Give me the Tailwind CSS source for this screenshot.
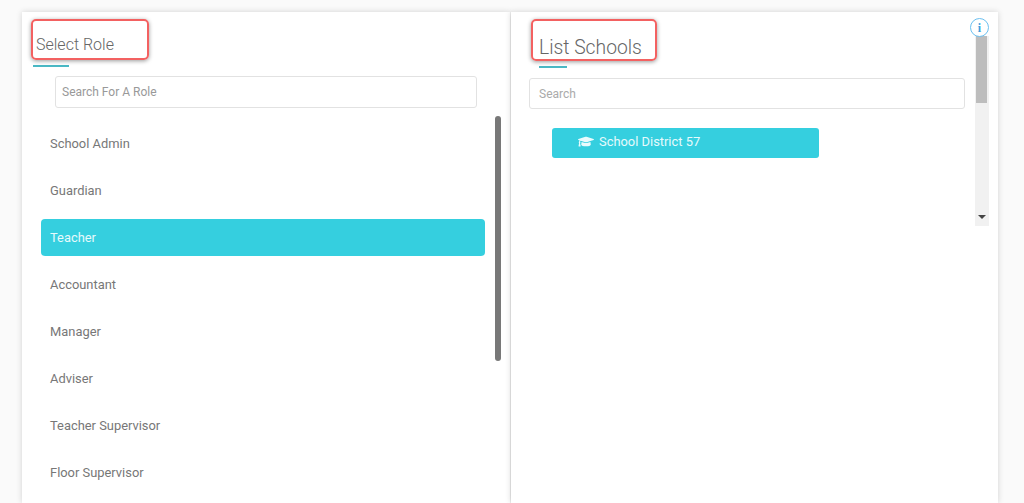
<!DOCTYPE html>
<html>
<head>
<meta charset="utf-8">
<script src="https://cdn.jsdelivr.net/npm/@tailwindcss/browser@4"></script>
</head>
<body class="h-[503px] w-[1024px] overflow-hidden bg-[#fafafa] font-['Roboto','Liberation_Sans',sans-serif]">
<div class="flex h-[503px] gap-px overflow-hidden pl-[22px] pt-3">
  <section class="relative h-[491px] w-[488px] shrink-0 overflow-hidden bg-white shadow-[0_0_6px_rgba(0,0,0,0.16)]">
    <div class="relative ml-[9px] mt-[7px] h-[41px] w-[118px] rounded-[5px] border-2 border-[#f36161] shadow-[0_1px_4px_rgba(0,0,0,0.4)]">
      <h2 class="pl-[3px] pt-[14px] text-[16px] font-light leading-5 text-[#666]">Select Role</h2>
    </div>
    <div class="ml-[11px] mt-[5px] h-0.5 w-9 bg-[#4ab8c4]"></div>
    <div class="ml-[33px] mt-[9px] flex h-8 w-[422px] items-center rounded-[3px] border border-[#e2e2e2] bg-white pl-[6px] text-[12px] text-[#999]">Search For A Role</div>
    <div class="ml-[19px] mt-[17px] flex h-[400px] w-[444px] flex-col gap-[10px] overflow-hidden text-[12.9px] text-[#777]">
      <div class="flex h-[37px] shrink-0 items-center pl-[9px]">School Admin</div>
      <div class="flex h-[37px] shrink-0 items-center pl-[9px]">Guardian</div>
      <div class="flex h-[37px] shrink-0 items-center rounded-[4px] bg-[#35cfdf] pl-[9px] text-[#e6fafc]">Teacher</div>
      <div class="flex h-[37px] shrink-0 items-center pl-[9px]">Accountant</div>
      <div class="flex h-[37px] shrink-0 items-center pl-[9px]">Manager</div>
      <div class="flex h-[37px] shrink-0 items-center pl-[9px]">Adviser</div>
      <div class="flex h-[37px] shrink-0 items-center pl-[9px]">Teacher Supervisor</div>
      <div class="flex h-[37px] shrink-0 items-center pl-[9px]">Floor Supervisor</div>
    </div>
    <div class="absolute left-[473px] top-[104px] h-[245px] w-[6px] rounded-[3px] bg-[#787878]"></div>
  </section>
  <section class="relative h-[491px] w-[487px] shrink-0 overflow-hidden bg-white shadow-[0_0_6px_rgba(0,0,0,0.16)]">
    <div class="relative ml-5 mt-[7px] h-[42px] w-[126px] rounded-[5px] border-2 border-[#f36161] shadow-[0_1px_4px_rgba(0,0,0,0.4)]">
      <h2 class="pl-[6px] pt-[15px] text-[19.3px] font-light leading-6 text-[#666]">List Schools</h2>
    </div>
    <div class="ml-7 mt-[5px] h-0.5 w-7 bg-[#4ab8c4]"></div>
    <div class="ml-[18px] mt-[10px] flex h-[31px] w-[436px] items-center rounded-[3px] border border-[#e2e2e2] bg-white pl-[9px] text-[12px] text-[#aaa]">Search</div>
    <div class="ml-[41px] mt-[19px] flex h-[30px] w-[267px] items-center rounded-[3px] bg-[#35cfdf] pb-[3px] pl-[26px] text-[12.9px] text-[#e6fafc]">
      <svg class="mr-[5px] h-[13px] w-[16px]" viewBox="0 0 640 512" fill="#eafbfd"><path d="M622.3 153.2 343.4 67.5c-15.2-4.7-31.6-4.7-46.8 0L17.7 153.2c-23.6 7.3-23.6 38.3 0 45.6l48.6 14.9c-10.7 13.2-17.2 29.4-17.9 47.1C38.7 266.9 32 278.1 32 291.2c0 11.8 5.5 21.9 13.9 28.8L20.4 434.7C18.2 444.6 25.8 454 36 454h56c10.2 0 17.8-9.4 15.6-19.3L82.1 320c8.4-6.9 13.9-17 13.9-28.8 0-12.6-6.3-23.4-15.6-30.3.9-15 9-28.300 21.400-36.300l195 59.900c9 2.800 26.600 6.300 46.800 0l278.900-85.700c23.500-7.200 23.500-38.300-.2-45.600zM352.800 315.900c-28.500 8.800-52.800 3.900-65.600 0L142.200 271.400 128 384c0 35.300 86 64 192 64s192-28.700 192-64l-14.200-112.600-145 44.500z"/></svg>
      School District 57
    </div>
    <div class="absolute left-[464px] top-6 flex h-[190px] w-[14px] flex-col justify-between bg-[#f1f1f1]">
      <div class="ml-px h-[67px] w-[11px] bg-[#bdbdbd]"></div>
      <div class="mb-[7px] ml-[3px] h-0 w-0 border-x-[4px] border-t-[4px] border-x-transparent border-t-[#444]"></div>
    </div>
    <div class="absolute left-[459px] top-[6px] flex h-[19px] w-[19px] items-center justify-center rounded-full border-[1.5px] border-[#6cc0f0] bg-white font-['Liberation_Serif',serif] text-[12px] font-bold text-[#3f9fdc]">i</div>
  </section>
</div>
</body>
</html>
